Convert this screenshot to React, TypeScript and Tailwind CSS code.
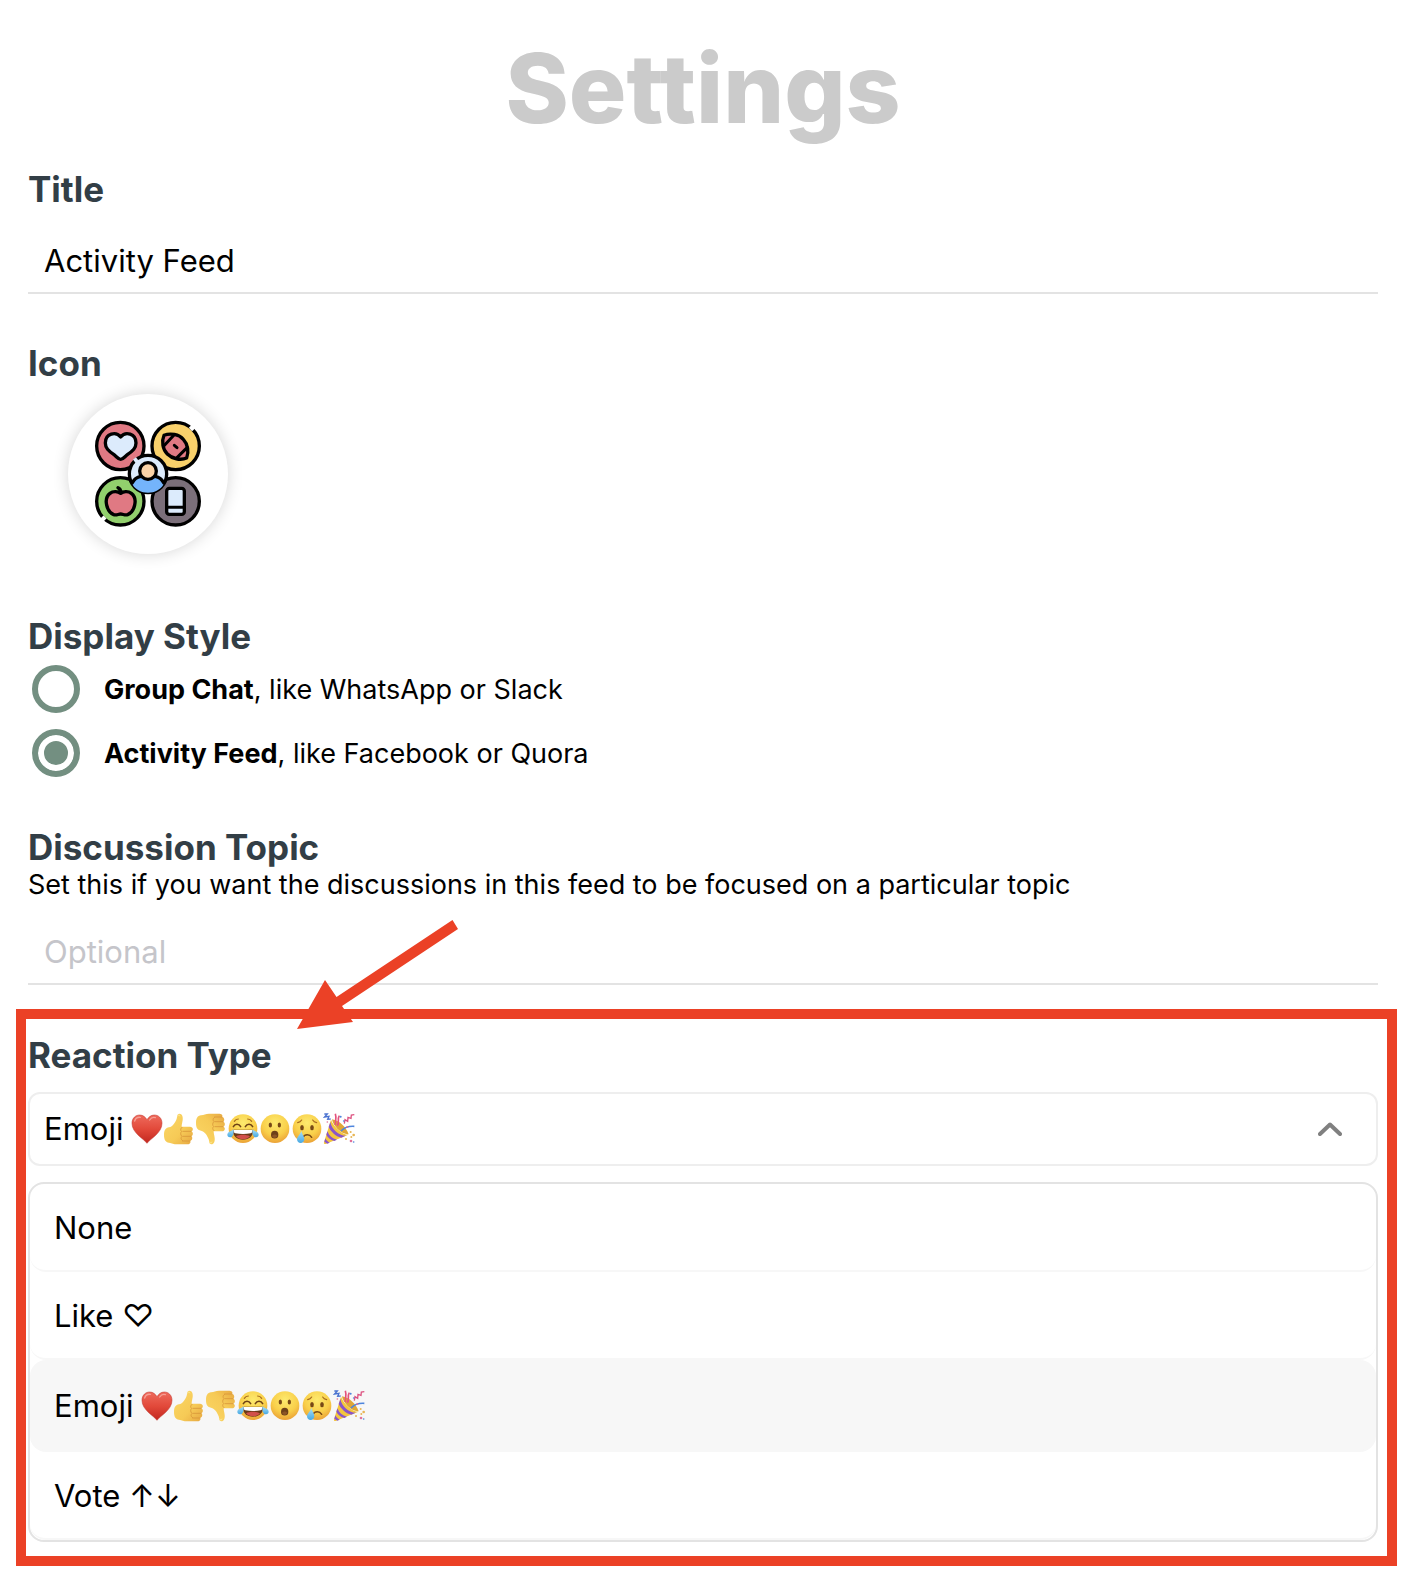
import { useState } from "react";
import type { ReactNode } from "react";

// === Emoji ===
function EmojiDefs() {
  return (
    <svg className="absolute size-0" aria-hidden="true">
      <defs>
        <radialGradient id="face" cx="0.5" cy="0.3" r="0.72">
          <stop offset="0" stopColor="#fdea6e" />
          <stop offset="0.6" stopColor="#f9cf4a" />
          <stop offset="1" stopColor="#ea9f35" />
        </radialGradient>
        <linearGradient id="heart" x1="0" y1="0" x2="0" y2="1">
          <stop offset="0" stopColor="#ee6a5c" />
          <stop offset="0.5" stopColor="#e2493a" />
          <stop offset="1" stopColor="#c2271f" />
        </linearGradient>
        <linearGradient id="hand" x1="0" y1="0" x2="1" y2="1">
          <stop offset="0" stopColor="#fbd766" />
          <stop offset="0.6" stopColor="#f6ca56" />
          <stop offset="1" stopColor="#e6a640" />
        </linearGradient>
        <linearGradient id="tear" x1="0" y1="0" x2="0" y2="1">
          <stop offset="0" stopColor="#a9e0f8" />
          <stop offset="1" stopColor="#47a8e2" />
        </linearGradient>
      </defs>
    </svg>
  );
}

function Emoji({ label, children }: { label: string; children: ReactNode }) {
  return (
    <svg viewBox="0 0 96 96" className="size-8 shrink-0" role="img" aria-label={label}>
      {children}
    </svg>
  );
}

function Thumb() {
  return (
    <>
      <path
        d="M3 66c0-15 5-21 15-23 12-3 19-15 23-26 2-7 1-14 8-15 9 0 11 10 10 19-1 8-3 13-3 20h25c10 0 11 12 4 14 6 2 6 13 0 15 5 3 3 12-3 14 2 7-3 10-11 10H42c-10 0-15-4-24-5C8 88 3 80 3 66z"
        fill="url(#hand)"
      />
      <path
        d="M60 55h24M60 70h24M59 84h21M57 43c-5 4-5 9-1 12-4 4-4 11 1 15-4 4-4 10 2 13"
        fill="none"
        stroke="#d9963a"
        strokeWidth="2.5"
        strokeLinecap="round"
      />
      <path d="M44 10c1-5 6-5 7 0" fill="none" stroke="#fde893" strokeWidth="3" />
    </>
  );
}

function EmojiRow() {
  return (
    <span className="flex">
      <Emoji label="❤️">
        <path
          d="M48 91C38 77 3 60 3 31 3 15 14 6 26 6c10 0 17 6 22 14C53 12 60 6 70 6c12 0 23 9 23 25 0 29-35 46-45 60z"
          fill="url(#heart)"
          stroke="#bd2c24"
          strokeWidth="1.5"
        />
        <path d="M11 24c3-9 10-12 17-11M56 21c4-6 10-9 17-7" fill="none" stroke="#f6a096" strokeWidth="4" strokeLinecap="round" />
      </Emoji>
      <Emoji label="👍">
        <Thumb />
      </Emoji>
      <Emoji label="👎">
        <g transform="matrix(1 0 0 -1 0 96)">
          <Thumb />
        </g>
      </Emoji>
      <Emoji label="😂">
        <circle cx="48" cy="47" r="43" fill="url(#face)" />
        <path d="M22 25c3-5 7-7 12-7M74 25c-3-5-7-7-12-7" fill="none" stroke="#a5691f" strokeWidth="3.5" strokeLinecap="round" />
        <path d="M19 41c5-10 17-10 22 0M55 41c5-10 17-10 22 0" fill="none" stroke="#6e4216" strokeWidth="4.5" strokeLinecap="round" />
        <path d="M17 50h62c0 19-13 30-31 30S17 69 17 50z" fill="#6a3a17" />
        <path d="M20 51h56c0 5-2 9-5 10-15 3-31 3-46 0-3-1-5-5-5-10z" fill="#fff" />
        <path d="M27 70c12-6 30-6 42 0-5 6-12 9-21 9s-16-3-21-9z" fill="#d1504a" />
        <path d="M20 49c1 14-2 24-11 24C-1 73-1 61 6 57c5-3 10-4 14-8zM76 49c-1 14 2 24 11 24 10 0 10-12 3-16-5-3-10-4-14-8z" fill="url(#tear)" />
      </Emoji>
      <Emoji label="😮">
        <circle cx="48" cy="47" r="43" fill="url(#face)" />
        <ellipse cx="34" cy="36" rx="5" ry="7.5" fill="#774816" />
        <ellipse cx="61" cy="36" rx="5" ry="7.5" fill="#774816" />
        <ellipse cx="47" cy="65" rx="11" ry="11.5" fill="#6e4119" />
        <path d="M39 69c4-6 12-6 16 0-4 8-12 8-16 0z" fill="#8c5526" />
      </Emoji>
      <Emoji label="😢">
        <circle cx="48" cy="47" r="43" fill="url(#face)" />
        <path d="M20 29c5-1 9-3 12-8M77 29c-5-1-9-3-12-8" fill="none" stroke="#a5691f" strokeWidth="3.5" strokeLinecap="round" />
        <ellipse cx="33" cy="44" rx="5.5" ry="8" fill="#774816" />
        <ellipse cx="63" cy="44" rx="5.5" ry="8" fill="#774816" />
        <path d="M36 73c5-10 20-10 26 0" fill="none" stroke="#774816" strokeWidth="4.5" strokeLinecap="round" />
        <path d="M31 54c-3 11-13 17-13 25 0 7 5 11 11 11s11-5 11-11c0-9-6-14-9-25z" fill="url(#tear)" />
      </Emoji>
      <Emoji label="🎉">
        <path d="M24 20 3 88c-1 4 1 6 5 5l68-28C60 66 32 42 24 20z" fill="#f4c63d" />
        <path d="M22 27c4 22 25 41 46 41L55 74C38 71 22 54 17 42z" fill="#8a55c8" />
        <path d="M27 19c2 18 28 47 50 45-8-22-28-42-50-45z" fill="#e0a637" />
        <path d="M13 55c5 13 15 22 29 25l-8 4C22 81 14 73 10 65zM7 76c3 6 7 10 13 13l-7 3-9-6z" fill="#8a55c8" />
        <path d="M37 36c0-13 4-23 0-34M43 38c8-12-2-17 6-30" fill="none" stroke="#e5537c" strokeWidth="5" />
        <path d="M54 54c13-13 25-15 40-14" fill="none" stroke="#4e85dd" strokeWidth="5" />
        <path d="M4 3h9l-8 9 13-2-4 9 9-1" fill="none" stroke="#4a72d0" strokeWidth="4" />
        <path d="m64 32 2-12 8 5 1-12 9 3 1-10 9-1" fill="none" stroke="#dd5280" strokeWidth="4" />
        <g fill="#4e85dd">
          <circle cx="53" cy="11" r="3" />
          <circle cx="62" cy="24" r="2.5" />
          <circle cx="92" cy="87" r="2.5" />
        </g>
        <g fill="#e0719a">
          <circle cx="84" cy="84" r="4" />
          <circle cx="13" cy="27" r="2.5" />
          <circle cx="73" cy="42" r="3" />
        </g>
        <g fill="#e8b655">
          <circle cx="83" cy="57" r="3" />
          <circle cx="92" cy="66" r="4" />
          <circle cx="69" cy="78" r="3" />
          <circle cx="85" cy="72" r="3" />
        </g>
      </Emoji>
    </span>
  );
}

// === Feed icon ===
function InterestsIcon() {
  return (
    <svg viewBox="24 27 480 480" className="size-full" role="img" aria-label="Interests">
      <g strokeWidth="10" stroke="#000" strokeLinecap="round" strokeLinejoin="round">
        <circle cx="181" cy="183" r="71" fill="#e07983" />
        <circle cx="347" cy="183" r="71" fill="#f9d16b" />
        <circle cx="181" cy="349" r="71" fill="#92d06d" />
        <circle cx="347" cy="349" r="71" fill="#7b6f7a" />
        <path d="M391 124l10 10" stroke="#fff" strokeWidth="13" strokeLinecap="butt" />
        <path d="M126 396l9 9" stroke="#fff" strokeWidth="13" strokeLinecap="butt" />
        <path
          d="M182 223c-8 0-12-8-20-14-17-12-26-20-26-35 0-29 32-36 46-18 14-18 46-11 46 18 0 15-9 23-26 35-8 6-12 14-20 14z"
          fill="#dcebfc"
        />
        <path d="M312 151c19-8 45-3 58 12 14 15 17 38 10 56-19 8-44 2-58-12-14-14-18-38-10-56z" fill="#e07983" />
        <path d="M312 182l30-32M351 218l31-31M343 181l8 7" fill="none" strokeWidth="9" />
        <path
          d="M182 325c-8-6-22-8-32 0-22 17-8 57 11 64 8 3 14-2 21-2s13 5 21 2c19-7 33-47 11-64-10-8-24-6-32 0zM182 324c1-7-2-13-8-16"
          fill="#e07983"
        />
        <rect x="320" y="310" width="53" height="78" rx="8" fill="#dcebfc" />
        <path d="M322 367h50" strokeWidth="9" />
        <circle cx="264" cy="267" r="56" fill="#dcebfc" />
        <path d="M218 299c-2-13 14-23 28-24 11 9 26 9 37 0 14 1 30 11 27 24-8 14-26 24-46 24s-38-10-46-24z" fill="#74b4fb" stroke="none" />
        <path d="M217 293c5-10 14-17 25-19M311 293c-5-10-14-17-25-19" fill="none" />
        <circle cx="264" cy="258" r="25" fill="#fad3a8" />
        <path d="M223 229l9-7" stroke="#dcebfc" strokeWidth="13" strokeLinecap="butt" />
      </g>
    </svg>
  );
}

const reactions: { id: string; label: string; extra?: ReactNode; row: string }[] = [
  { id: "none", label: "None", row: "h-[88px]" },
  { id: "like", label: "Like", extra: "♡", row: "h-[88px]" },
  { id: "emoji", label: "Emoji", extra: <EmojiRow />, row: "h-[92px]" },
  { id: "vote", label: "Vote", extra: "↑↓", row: "h-[88px]" },
];

const styles = [
  { id: "chat", name: "Group Chat", like: ", like WhatsApp or Slack" },
  { id: "feed", name: "Activity Feed", like: ", like Facebook or Quora" },
];

const heading = "block text-[35px] leading-10 font-bold text-[#323e46]";
const field =
  "block h-[66px] w-full border-b-2 border-[#e3e3e3] bg-transparent px-4 text-[31px] text-black outline-none placeholder:text-[#c5c5ca]";

export default function App() {
  const [title, setTitle] = useState("Activity Feed");
  const [topic, setTopic] = useState("");
  const [display, setDisplay] = useState("feed");
  const [reaction, setReaction] = useState("emoji");
  const [open, setOpen] = useState(true);

  const current = reactions.find((r) => r.id === reaction)!;

  return (
    <main className="bg-white pt-10 pb-7 font-['Inter',sans-serif] text-black">
      <EmojiDefs />

      <div className="pr-[34px] pl-7">
        <h1 className="text-center text-8xl leading-none font-extrabold text-[#cbcbcb]">Settings</h1>

        {/* === Title === */}
        <label htmlFor="title" className={`mt-[33px] ${heading}`}>
          Title
        </label>
        <input id="title" className={`mt-[19px] ${field}`} value={title} onChange={(e) => setTitle(e.target.value)} />

        {/* === Icon === */}
        <h2 className={`mt-[49px] ${heading}`}>Icon</h2>
        <button
          type="button"
          aria-label="Change icon"
          className="mt-[11px] ml-10 block size-40 rounded-full bg-white shadow-[0_0_16px_rgba(0,0,0,0.16)]"
        >
          <InterestsIcon />
        </button>

        {/* === Display style === */}
        <fieldset className="mt-[62px]">
          <legend className={heading}>Display Style</legend>
          <div className="mt-[9px] flex flex-col gap-4 pl-1">
            {styles.map((s) => (
              <label key={s.id} className="flex h-12 items-center gap-6 text-[27px]">
                <input
                  type="radio"
                  name="display"
                  className="size-12 shrink-0 appearance-none rounded-full border-[6px] border-[#738f81] checked:bg-[#738f81] checked:shadow-[inset_0_0_0_6px_#fff]"
                  checked={display === s.id}
                  onChange={() => setDisplay(s.id)}
                />
                <span className="pt-[3px]">
                  <b className="font-bold">{s.name}</b>
                  {s.like}
                </span>
              </label>
            ))}
          </div>
        </fieldset>

        {/* === Topic === */}
        <label htmlFor="topic" className={`mt-[50px] ${heading}`}>
          Discussion Topic
        </label>
        <p className="text-[27px] leading-9">
          Set this if you want the discussions in this feed to be focused on a particular topic
        </p>
        <input
          id="topic"
          className={`mt-4 ${field}`}
          placeholder="Optional"
          value={topic}
          onChange={(e) => setTopic(e.target.value)}
        />
      </div>

      {/* === Reaction type, highlighted === */}
      <section className="relative mt-6 mr-[15px] ml-4 border-10 border-[#eb4126] pt-4 pr-[9px] pb-[14px] pl-[2px]">
        <svg viewBox="0 0 162 110" className="absolute -top-[99px] left-[271px] h-[110px] w-[162px]" aria-hidden="true">
          <path d="M0 109 28 60 39.500 77 155.500 0 161 9 45 86 56 102z" fill="#eb4126" />
        </svg>

        <h2 id="reaction-label" className={heading}>
          Reaction Type
        </h2>
        <button
          type="button"
          aria-haspopup="listbox"
          aria-expanded={open}
          aria-labelledby="reaction-label"
          onClick={() => setOpen(!open)}
          className="mt-[17px] flex h-[74px] w-full items-center justify-between rounded-xl border-2 border-[#eee] pr-[34px] pl-[14px] text-[31px]"
        >
          <span className="flex items-center gap-2">
            {current.label} {current.extra}
          </span>
          <svg viewBox="0 0 24 14" className="h-[14px] w-6" fill="none" stroke="#808080" strokeWidth="4" strokeLinecap="round" strokeLinejoin="round">
            <path d="M2 12 12 2.500 22 12" />
          </svg>
        </button>

        {open && (
          <div role="listbox" aria-labelledby="reaction-label" className="mt-4 rounded-2xl border-2 border-[#e3e3e3]">
            {reactions.map((r) => (
              <button
                key={r.id}
                type="button"
                role="option"
                aria-selected={r.id === reaction}
                onClick={() => setReaction(r.id)}
                className={`flex w-full items-center gap-2 rounded-2xl border-b-2 border-[#f7f7f7] px-6 pt-0.5 text-[31px] aria-selected:bg-[#f7f7f7] ${r.row}`}
              >
                {r.label} {r.extra}
              </button>
            ))}
          </div>
        )}
      </section>
    </main>
  );
}
